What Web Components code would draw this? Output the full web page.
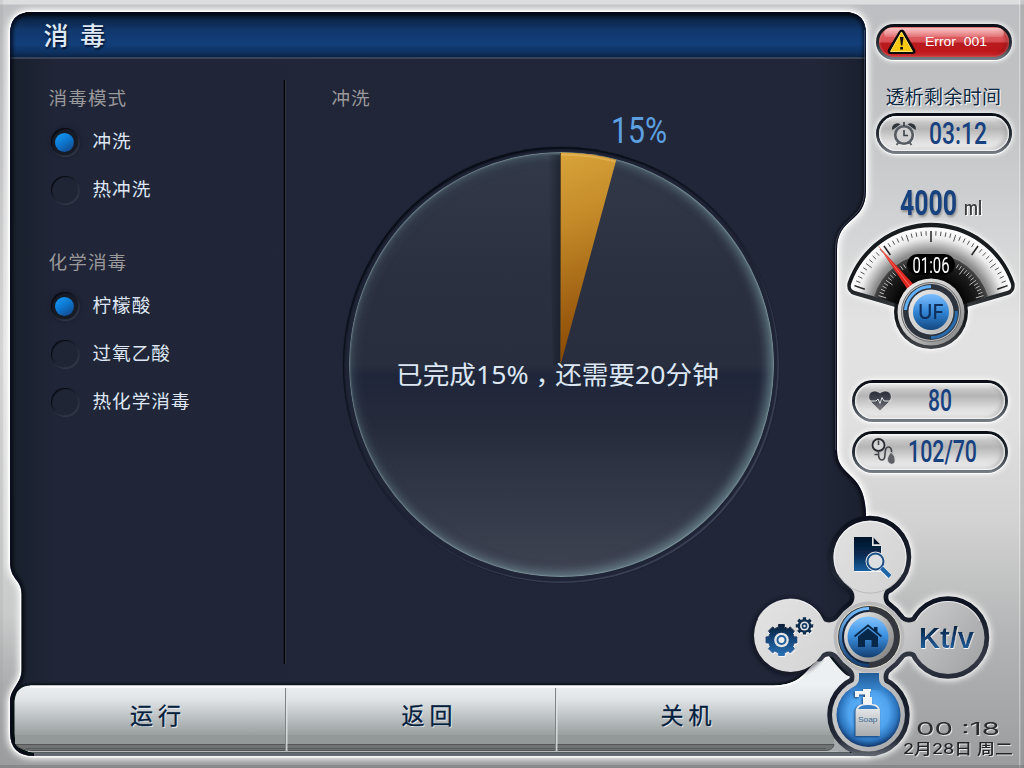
<!DOCTYPE html>
<html lang="zh-CN">
<head>
<meta charset="utf-8">
<title>消毒</title>
<style>
html,body{margin:0;width:1024px;height:768px;overflow:hidden;font-family:"Noto Sans CJK SC","Noto Sans",sans-serif}
</style>
</head>
<body>
<dialysis-screen></dialysis-screen>
<script>
const define = (name, render, after) => customElements.define(name, class extends HTMLElement {
  connectedCallback() {
    if (this.shadowRoot) return;
    const a = (k, d = '') => this.getAttribute(k) ?? d;
    this.attachShadow({ mode: 'open' }).innerHTML = render(a);
    if (after) after(this, a);
  }
});

/* One line of text condensed or widened to a fixed width */
define('fit-text', a => {
  const w = +a('w'), h = +a('h'), s = +a('size');
  return `<style>:host{display:block;width:${w}px;height:${h}px;flex:none}svg{display:block;overflow:visible;filter:${a('shadow', 'none')}}
  text{font-family:${a('font', 'Roboto')},"Noto Sans CJK SC",sans-serif;font-weight:${a('weight', '400')};font-size:${s}px;fill:${a('color', '#17417f')};white-space:pre}.comma{font-family:"Noto Sans CJK TC"}</style>
  <svg width="${w}" height="${h}"><text x="0" y="0" transform="translate(0 ${h})">${a('value').replace(/，(.*)/, '<tspan class="comma" lang="zh-Hant" dy="8">，</tspan><tspan dy="-8">$1</tspan>')}</text></svg>`;
}, (el, a) => {
  const t = el.shadowRoot.querySelector('text');
  const n = t.getComputedTextLength();
  if (n) t.setAttribute('transform', `translate(0 ${a('h')}) scale(${a('w') / n} 1)`);
});

define('panel-frame', () => {
  const screen = 'M10 34Q10 12 32 12H844Q866 12 866 34V190C866 224 837 216 837 250V450C837 479 866 470 866 516L880 600L869 756H34Q10 756 10 732V702C10 688 21.500 684 21.500 670V594C21.500 579 10 580 10 562Z';
  return `<style>:host{display:block}svg{display:block}</style>
  <svg width="1024" height="768" viewBox="0 0 1024 768">
  <defs>
    <linearGradient id="bg" x2="0" y2="1"><stop offset="0" stop-color="#bdbec1"/><stop offset=".15" stop-color="#c2c3c5"/><stop offset=".3" stop-color="#d3d4d5"/><stop offset=".42" stop-color="#e2e2e2"/><stop offset=".55" stop-color="#e0e0e0"/><stop offset=".68" stop-color="#d2d2d2"/><stop offset=".83" stop-color="#b3b4b5"/><stop offset="1" stop-color="#9b9c9e"/></linearGradient>
    <linearGradient id="lf" x2="0" y2="1"><stop offset="0" stop-color="#bdbec1"/><stop offset=".45" stop-color="#e0e0e0"/><stop offset=".8" stop-color="#c9caca"/><stop offset=".9" stop-color="#a9aaab"/><stop offset="1" stop-color="#9b9c9e"/></linearGradient>
    <linearGradient id="sc"><stop offset="0" stop-color="#17202c"/><stop offset=".05" stop-color="#202537"/><stop offset=".93" stop-color="#212638"/><stop offset="1" stop-color="#191e2c"/></linearGradient>
    <linearGradient id="hd" x2="0" y2="1"><stop offset="0" stop-color="#030a14"/><stop offset=".16" stop-color="#0b2547"/><stop offset=".4" stop-color="#11386d"/><stop offset=".72" stop-color="#123e79"/><stop offset=".9" stop-color="#0e3160"/><stop offset="1" stop-color="#0a2345"/></linearGradient>
    <linearGradient id="bar" gradientUnits="userSpaceOnUse" x1="0" y1="685" x2="0" y2="744"><stop offset="0" stop-color="#edf0f2"/><stop offset=".25" stop-color="#dfe3e5"/><stop offset=".55" stop-color="#bcc1c3"/><stop offset=".9" stop-color="#939899"/><stop offset="1" stop-color="#a6aaab"/></linearGradient>
    <clipPath id="c"><path d="${screen}"/></clipPath>
    <filter id="b3" x="-10%" y="-10%" width="120%" height="120%"><feGaussianBlur stdDeviation="3"/></filter>
    <filter id="b2" x="-10%" y="-10%" width="120%" height="120%"><feGaussianBlur stdDeviation="2"/></filter>
    <filter id="b1"><feGaussianBlur stdDeviation="1.2"/></filter>
  </defs>
  <rect width="1024" height="768" fill="url(#bg)"/>
  <rect width="22" height="768" fill="url(#lf)"/>
  <path d="M0 .5H1024M0 3H1024" stroke="#dcdddf" stroke-width="3"/>
  <rect x="1020" width="4" height="768" fill="#888" opacity=".28"/><rect x="1019" width="1.500" height="768" fill="#fff" opacity=".35"/>
  <rect width="3" height="768" fill="#999" opacity=".2"/><rect y="765" width="1024" height="3" fill="#707173" opacity=".45"/>
  <g fill="#fff" stroke="#fff" stroke-width="6" stroke-linejoin="round" filter="url(#b3)" opacity=".95">
    <path d="${screen}"/><circle cx="870" cy="557" r="40"/><circle cx="948" cy="637.500" r="40"/><circle cx="869" cy="715" r="40"/><circle cx="869" cy="637" r="40"/>
  </g>
  <path d="${screen}" fill="none" stroke="#fff" stroke-width="3" opacity=".8"/>
  <path d="${screen}" fill="url(#sc)"/>
  <g clip-path="url(#c)">
    <rect x="10" y="12" width="856" height="45" fill="url(#hd)"/>
    <rect x="10" y="57" width="856" height="2" fill="#39445a"/>
    <path d="${screen}" fill="none" stroke="#02050a" stroke-width="4" filter="url(#b2)"/>
    <path d="M864.500 30V190C864.500 222 835.500 216 835.500 250V450" fill="none" stroke="#77808f" opacity=".45"/>
  </g>
  <path d="M284.500 80V664" stroke="#000" stroke-width="1.400"/><path d="M285.700 80V664" stroke="#3b4152" stroke-width=".8"/>
  <path d="M13 704Q13 684 32 684H776C812 681 808 655 831 655L866 700V754H34Q12 754 12 730Z" fill="#06090f" filter="url(#b1)"/>
  <path d="M34 754.500H869" stroke="#646973" stroke-width="3"/>
  <path d="M14.500 701Q16 685.500 31 685.500H774C812 684 806 659 829 656Q846 678 850 676V752.500H33Q14.500 750 14.500 733Z" fill="url(#bar)"/>
  <path d="M16 743V735H836L846 750L838 752H34Q19 750 16 741Z" fill="#a4a9ab"/>
  <rect x="15" y="735" width="819" height="9" fill="#939899"/>
  <path d="M16 744.500H834Q833 750 826 750.500H33Q19 750 16 744.500Z" fill="#707373" stroke="#555" stroke-width="1"/>
  <path d="M26 748.500H826" stroke="#555a5b" stroke-width="1"/><path d="M28 751.500H838" stroke="#b6babb" stroke-width="1"/>
  <path d="M30 686.500H774C812 685 806 660 829 657" fill="none" stroke="#fff" stroke-width="1.800"/>
  <g stroke-width="1"><path d="M285.500 688V751M555.500 688V751" stroke="#7e8384"/><path d="M286.800 688V751M556.800 688V751" stroke="#e2e6e8" stroke-width="1.200"/></g>
  </svg>`;
});

define('radio-option', a => `<style>
  :host{display:flex;align-items:center;height:28px;color:#dfe7f4;font-size:18.600px;letter-spacing:1px;line-height:28px}
  i{box-sizing:border-box;width:28px;height:28px;border-radius:50%;margin-right:14px;flex:none;display:grid;place-items:center;background:${a('on') ? '#171b26' : '#202536'};box-shadow:inset 1px 1px 1px #07090f,inset -.5px -.5px 1px #373c4c,.5px 1px 1px #353a49${a('on') ? ',0 0 5px #0a122066' : ''}}
  b{width:19px;height:19px;border-radius:50%;background:linear-gradient(145deg,#13a0ff,#0d74cb 50%,#163f80);display:${a('on') ? 'block' : 'none'}}
  span{transform:translateY(-2px)}</style><i><b></b></i><span><slot></slot></span>`);

define('option-group', a => `<style>:host{display:flex;flex-direction:column;gap:20px}h3{margin:-1px 0 -2px -.5px;font-weight:400;font-size:18.600px;line-height:26px;letter-spacing:1.100px;color:#99989a}div{display:flex;flex-direction:column;gap:20px;margin-left:1.500px}</style><h3>${a('label')}</h3><div><slot></slot></div>`);

define('pie-progress', a => `<style>
  :host{display:grid;width:436px;height:436px;border-radius:50%}
  .ring,.disc,svg,p{grid-area:1/1}
  .ring{border-radius:50%;background:#1f2436;box-shadow:inset 1px 2px 2px #070b13,inset -1.500px -1.500px 1px #3b4155,0 0 1px #0d111c}
  .disc{margin:5.500px;border-radius:50%;background:linear-gradient(#323948,#2b3040 30%,#292e3f 50%,#20263a 52.500%,#252a3b 63%,#30354a00 63%),linear-gradient(#252a3b 63%,#303646 78%,#3f4352);box-shadow:inset 0 0 1.500px 1px #8aa2a4aa,inset -5px -3px 12px #80a2a899,inset 1px 0 14px #6f929a66}
  svg{display:block}
  p{margin:214.500px 0 0 53px;z-index:1}</style>
  <div class="ring"></div><div class="disc"></div>
  <svg width="436" height="436"><defs><linearGradient id="g" x2=".1" y2="1"><stop offset="0" stop-color="#d9a43a"/><stop offset=".35" stop-color="#c38928"/><stop offset="1" stop-color="#884603"/></linearGradient>
  <linearGradient id="s"><stop offset="0" stop-color="#111722" stop-opacity="0"/><stop offset="1" stop-color="#111722" stop-opacity=".55"/></linearGradient></defs>
  <path d="M205 8H217.500V218H210Z" fill="url(#s)"/><path d="M217.500 218V5.500A212.500 212.500 0 0 1 273.300 12.800Z" fill="url(#g)"/><path d="M218 7.500A211 211 0 0 1 272.500 14.500" fill="none" stroke="#f0c873" stroke-width="2" opacity=".4"/><path d="M217.500 6V218" stroke="#5f4420"/></svg>
  <p><fit-text w="323" h="23" size="25" font="'Noto Sans'" color="#dce7f3" value="${a('message')}"></fit-text></p>`);

define('status-pill', a => {
  const red = a('kind') === 'error';
  return `<style>:host{display:block}div{box-sizing:border-box;width:${a('w')}px;height:${a('h')}px;border-radius:21px;padding:3px;background:linear-gradient(#090d13,#292f37 55%,#7a8088);box-shadow:0 0 4px 2px #ffffffb0,0 1px 1px #fff}
  section{height:100%;box-sizing:border-box;border-radius:20px;position:relative;display:flex;align-items:center;background:${red ? 'linear-gradient(#e56c70,#d95054 48%,#b71b1f 55%,#bd171b 80%,#df3135)' : 'linear-gradient(#f4f4f4,#c6c6c6 18%,#b5b5b5 36%,#dfdfdf 72%,#efefef)'};box-shadow:inset 0 0 2px 1px ${red ? '#f6b2b455' : '#fff'},inset -3px -1px 4px ${red ? '#80101088' : '#8a8a8a99'}}
  ${red ? 'section:before{content:"";position:absolute;left:5px;right:5px;top:1px;height:9px;border-radius:10px 10px 6px 6px;background:linear-gradient(#ffdadacc,#ffffff22)}' : ''}
  ::slotted(*){position:relative}</style><div><section><slot></slot></section></div>`;
});

const icons = {
  warn: '<path d="M17 3.500Q14.500 3.500 13.500 6L3 23.500Q1.500 28 6 28H27Q32 28 30 23.500L20 6Q19 3.500 17 3.500Z" fill="#0b0b0b"/><path d="M16.500 6L27.500 25.500H5.500Z" fill="#f7c811" stroke="#ffe36b" stroke-linejoin="round"/><path d="M14.900 11H18.500L17.400 19.500H16ZM15.200 21H18V23.500H15.200Z" fill="#111"/>',
  alarm: '<g stroke="#f3f3f3" transform="translate(.8 .8)" fill="none" opacity=".8"><circle cx="13" cy="14" r="9.500"/></g><circle cx="13" cy="14" r="8.800" fill="#cfcfcf" stroke="#565b61" stroke-width="2.600"/><path d="M13 9V14.500H17M13 1V5" fill="none" stroke="#3b4046" stroke-width="1.600"/><path d="M1.500 9C-.5 5 5 0 9.500 3.200ZM24.500 9C26.500 5 21 0 16.500 3.200Z" fill="#30353b"/><path d="M7.500 21.500L5.500 24M18.500 21.500L20.500 24" stroke="#5a5f64" stroke-width="2"/>',
  heart: '<defs><linearGradient id="h" x2="0" y2="1"><stop offset="0" stop-color="#292d38"/><stop offset=".5" stop-color="#484c56"/><stop offset="1" stop-color="#858688"/></linearGradient></defs><path d="M12 22L2.500 12.500C-2.500 6 4-1.500 12 4C20-1.500 26.500 6 21.500 12.500Z" fill="url(#h)" stroke="#eee" stroke-width=".6"/><path d="M.5 12H8L10 10L12 14.500L14 8.500L16 12H23.500" fill="none" stroke="#e4e4e4" stroke-width="1"/>',
  bp: '<circle cx="7.500" cy="7" r="6" fill="#d5d5d5" stroke="#282b30" stroke-width="1.800"/><path d="M7.500 7V2.500M7.500 13V16Q7.500 22 11 22Q14 22 14 16Q14 8.500 18 9Q21 10 20.500 15M3.500 16.500H8" fill="none" stroke="#42454a" stroke-width="1.600"/><path d="M20 14Q25 18 24 24Q21 28.500 17 24Q15 20 20 14Z" fill="#606166" stroke="#eee" stroke-width=".6"/>'
};
define('glyph-icon', a => `<style>:host{display:block;width:${a('w')}px;height:${a('h')}px;flex:none}svg{display:block;overflow:visible}</style><svg width="${a('w')}" height="${a('h')}">${icons[a('name')]}</svg>`);

define('uf-gauge', a => {
  let t = '';
  const tick = (deg, r1, r2, c, w) => {
    const q = deg * Math.PI / 180, s = Math.sin(q), k = -Math.cos(q);
    t += `<path d="M${s * r1} ${k * r1}L${s * r2} ${k * r2}" stroke="${c}" stroke-width="${w}"/>`;
  };
  for (let i = -20; i <= 20; i++) {
    const m = i % 10 === 0, h = i % 5 === 0;
    tick(i * 3.55, 81, m ? 70 : h ? 74 : 76.5, m ? '#222' : '#555', m ? 1.5 : 1);
  }
  for (let i = 0; i < 13; i++) for (const s of [-1, 1]) tick(s * (30 + i * 3.55), 55, i % 5 === 2 ? 47 : 50.5, '#bbb', 1);
  return `<style>:host{display:block;width:170px;height:128px}svg{display:block;overflow:visible;filter:drop-shadow(0 0 1px #fff) drop-shadow(0 0 3px #fff)}text{font-family:Roboto,sans-serif}</style>
  <svg width="170" height="128" viewBox="-85 -89 170 128"><defs>
  <radialGradient id="f" gradientUnits="userSpaceOnUse" cx="0" cy="0" r="84"><stop offset=".72" stop-color="#8c8c8c"/><stop offset=".88" stop-color="#ececec"/><stop offset="1" stop-color="#fff"/></radialGradient>
  <radialGradient id="d" gradientUnits="userSpaceOnUse" cx="0" cy="0" r="62"><stop offset=".55" stop-color="#050505"/><stop offset=".8" stop-color="#1d1d1d"/><stop offset="1" stop-color="#5a5a5a"/></radialGradient>
  <linearGradient id="k" x2="1" y2="1"><stop offset="0" stop-color="#f5f5f5"/><stop offset=".5" stop-color="#c4c4c4"/><stop offset="1" stop-color="#777"/></linearGradient>
  <linearGradient id="u" x2="0" y2="1"><stop offset="0" stop-color="#7dbeff"/><stop offset=".5" stop-color="#3185d5"/><stop offset="1" stop-color="#14477f"/></linearGradient>
  <linearGradient id="o" x2="0" y2="1"><stop offset="0" stop-color="#1a1d20"/><stop offset=".6" stop-color="#15181b"/><stop offset="1" stop-color="#42464a"/></linearGradient></defs>
  <g fill="url(#o)"><path d="M-30 6L-36-5L-77-17Q-85-20-83.500-29A88 88 0 0 1 83.500-29Q85-20 77-17L36-5L30 6Z"/><circle r="37"/></g>
  <path d="M-34-9L-76-21Q-82-23-79.500-29A84.500 84.500 0 0 1 79.500-29Q82-23 76-21L34-9Z" fill="url(#f)"/>
  <path d="M-34-8L-57-15.500A59.500 59.500 0 0 1 57-15.500L34-8Z" fill="url(#d)"/>${t}
  <path d="M-52.500-66L-17-27L-23-22Z" fill="#df2620"/><path d="M-52.500-66L-20-24.500" stroke="#ff8b76" stroke-width=".7"/>
  <rect x="-24" y="-58" width="48" height="21" rx="10.500" fill="#000"/><text x="-18.500" y="-39.500" font-size="22" textLength="37" lengthAdjust="spacingAndGlyphs" fill="#fff">${a('time')}</text>
  <circle r="33.500" fill="url(#k)"/><circle r="29.500" fill="#bdbdbd" stroke="#6c6c6c" stroke-width="1"/><circle r="28" fill="#2c333d"/>
  <path d="M-25.500-2A25.500 25.500 0 0 1 0-25.500" fill="none" stroke="#62b1fb" stroke-width="3"/><path d="M25.500-1A25.500 25.500 0 0 1 0 25.500" fill="none" stroke="#286bad" stroke-width="3"/>
  <circle r="22.500" fill="#dedede"/><circle r="22" fill="url(#k)" opacity=".45"/><circle r="18" fill="url(#u)"/>
  <text x="-13" y="7" font-size="20" textLength="26" lengthAdjust="spacingAndGlyphs" style="font-family:Inter" font-weight="500" fill="#10305d">UF</text></svg>`;
});

define('nav-dock', () => {
  /* bridge between hub and a lobe 80px away, with 12px concave fillets */
  const neck = 'M-19.900-50A12 12 0 0 1-19.900-30L19.900-30A12 12 0 0 1 19.900-50Z';
  const necks = [0, 90, 180, 270].map(r => `<path d="${neck}" transform="translate(869 637) rotate(${r})"/>`).join('');
  const rest = '<circle cx="870" cy="557" r="36.500"/><circle cx="948" cy="637.500" r="36.500"/><circle cx="868.500" cy="715" r="36.500"/><circle cx="869" cy="637" r="36"/>' + necks;
  /* outline alternates between root and tip radius; ratios are fractions of one tooth pitch */
  const gear = (x, y, root, tip, n) => {
    const p = [];
    for (let i = 0; i < n; i++) for (const [f, r] of [[-.32, root], [-.24, tip], [.24, tip], [.32, root]]) {
      const q = (i + f) * 2 * Math.PI / n;
      p.push(`${(x + Math.sin(q) * r).toFixed(2)} ${(y - Math.cos(q) * r).toFixed(2)}`);
    }
    return `<path d="M${p.join('L')}Z"/>`;
  };
  return `<style>:host{display:block;position:absolute;left:740px;top:500px;width:284px;height:268px;pointer-events:none}svg{display:block}text{font-family:"Liberation Sans",sans-serif}</style>
  <svg width="284" height="268" viewBox="740 500 284 268"><defs>
  <linearGradient id="m" gradientUnits="userSpaceOnUse" x1="790" y1="560" x2="960" y2="700"><stop offset="0" stop-color="#e3e3e4"/><stop offset=".5" stop-color="#d2d2d3"/><stop offset="1" stop-color="#a0a1a3"/></linearGradient>
  <linearGradient id="dk" gradientUnits="userSpaceOnUse" x1="0" y1="515" x2="0" y2="757"><stop offset="0" stop-color="#0a0e1b"/><stop offset=".25" stop-color="#232835"/><stop offset=".36" stop-color="#0d1220"/><stop offset=".6" stop-color="#343945"/><stop offset=".75" stop-color="#141a28"/><stop offset=".93" stop-color="#262c38"/><stop offset="1" stop-color="#666b75"/></linearGradient>
  <linearGradient id="ib" gradientUnits="userSpaceOnUse" x1="0" y1="540" x2="0" y2="577"><stop offset="0" stop-color="#04172c"/><stop offset=".4" stop-color="#082a50"/><stop offset="1" stop-color="#1e72bd"/></linearGradient>
  <linearGradient id="gb" gradientUnits="userSpaceOnUse" x1="0" y1="622" x2="0" y2="655"><stop offset="0" stop-color="#04172c"/><stop offset=".45" stop-color="#123f70"/><stop offset="1" stop-color="#2770b3"/></linearGradient>
  <linearGradient id="bl" x2="0" y2="1"><stop offset="0" stop-color="#83c4ff"/><stop offset=".45" stop-color="#3e93e4"/><stop offset="1" stop-color="#123d70"/></linearGradient>
  <linearGradient id="ar" gradientUnits="userSpaceOnUse" x1="0" y1="608" x2="0" y2="666"><stop offset="0" stop-color="#77bfff"/><stop offset="1" stop-color="#123d73"/></linearGradient>
  <linearGradient id="kn" x2="1" y2="1"><stop offset="0" stop-color="#f5f5f5"/><stop offset="1" stop-color="#777"/></linearGradient>
  <linearGradient id="bt" x2="0" y2="1"><stop offset="0" stop-color="#eef0f1"/><stop offset="1" stop-color="#a6aaad"/></linearGradient>
  <radialGradient id="so" gradientUnits="userSpaceOnUse" cx="868.500" cy="712" r="34"><stop offset="0" stop-color="#69bbff"/><stop offset=".6" stop-color="#4fa3ee"/><stop offset=".85" stop-color="#2c74bd"/><stop offset="1" stop-color="#153f76"/></radialGradient>
  <linearGradient id="np" gradientUnits="userSpaceOnUse" x1="0" y1="670" x2="0" y2="693"><stop offset="0" stop-color="#1c548f"/><stop offset="1" stop-color="#3d8cd6"/></linearGradient>
  <filter id="b" x="-30%" y="-30%" width="160%" height="160%"><feGaussianBlur stdDeviation="2.5"/></filter><filter id="e"><feDropShadow dx=".5" dy="1" stdDeviation=".2" flood-color="#f8f8f8"/></filter>
  <mask id="md" maskUnits="userSpaceOnUse" x="740" y="500" width="284" height="268"><g fill="#fff" stroke="#fff" stroke-width="9.500" stroke-linejoin="round">${rest}</g></mask>
  <mask id="ml" maskUnits="userSpaceOnUse" x="740" y="500" width="284" height="268"><g fill="#fff"><circle cx="790.500" cy="635.500" r="36.500"/>${rest}</g></mask>
  <mask id="mw" maskUnits="userSpaceOnUse" x="740" y="500" width="284" height="268"><path fill="#fff" d="M740 500H860V640L838 654Q829 652 822 663Q807 684 777 684H740Z"/></mask></defs>
  <g mask="url(#mw)"><g fill="#070b14" stroke="#070b14" stroke-width="5" filter="url(#b)" opacity=".7"><circle cx="790" cy="636.500" r="35.500"/><circle cx="869" cy="558" r="36"/></g></g>
  <rect x="740" y="500" width="284" height="268" fill="url(#dk)" mask="url(#md)"/>
  <rect x="740" y="500" width="284" height="268" fill="url(#m)" mask="url(#ml)"/>
  <g fill="none" stroke="#fff" stroke-width="1.200" opacity=".65"><path d="M838 574A36 36 0 1 1 902 574M916 621A36 36 0 0 1 980 621M758 619A36 36 0 0 1 820 615"/></g>
  <path d="M900 577A36 36 0 0 1 840 577" stroke="#9a9a9c" fill="none" opacity=".45"/>
  <circle cx="869" cy="637" r="35.500" fill="#b9b9bb"/><circle cx="869" cy="637" r="31.500" fill="#34373d" stroke="#e1dfcf" stroke-width="1"/>
  <path d="M869 608.500A28.500 28.500 0 0 0 869 665.500" fill="none" stroke="url(#ar)" stroke-width="3"/>
  <path d="M869 611A26 26 0 0 0 869 663" fill="none" stroke="#0c2342" stroke-width="1.500"/><circle cx="869" cy="637" r="25" fill="url(#kn)"/><circle cx="868" cy="637" r="20.500" fill="url(#bl)"/>
  <path d="M858 636L868 628L878 636V647H871.500V640H865V647H858ZM874 627H877.500V633L874 630Z" fill="#082849"/><path d="M854.500 636.500L868 625.500L881.500 636.500" fill="none" stroke="#082849" stroke-width="1.800"/><path d="M857.500 636.500L868 628L878.500 636.500" fill="none" stroke="#4f9de6" stroke-width=".7"/>
  <circle cx="868.500" cy="715" r="32" fill="url(#so)"/><path d="M859 673H879V679Q879 685 888 690H849Q859 685 859 679Z" fill="url(#np)"/>
  <g fill="url(#bt)" style="filter:drop-shadow(-1px 1px 1px #123d70)"><path d="M855 695V691H863V689H871V691.500H870V697H872V704H863V697H865V694.500H859V697H855Z" fill="#f2f4f5"/><path d="M855.500 736V712Q856 704 864 704H872Q880 704 880 712V736H855.500Z"/><path d="M858 709Q860 705 868 705Q876 705 878 709Z" fill="#347fc5"/></g>
  <text x="858" y="722" font-size="8" textLength="19.500" lengthAdjust="spacingAndGlyphs" fill="#3d6a94">Soap</text>
  <g filter="url(#e)"><path d="M854 537H872V546H881V571H854Z" fill="url(#ib)"/><path d="M873.500 537.500L880.500 544.500H873.500Z" fill="#06182d"/></g>
  <circle cx="875.500" cy="561.500" r="10" fill="#dedfe0"/><circle cx="875.500" cy="561.500" r="8" fill="#dedfe0" stroke="#174e86" stroke-width="2"/><path d="M881 568L890 577" stroke="#efefef" stroke-width="6"/><path d="M881.500 568L890 576.500" stroke="#1d66aa" stroke-width="4"/>
  <g fill="url(#gb)" stroke="url(#gb)" stroke-width="1" stroke-linejoin="round" filter="url(#e)">${gear(781.500, 640, 13.2, 15.8, 8)}</g><circle cx="781.500" cy="640" r="7.300" fill="#e4e4e5"/><circle cx="781.500" cy="640" r="5" fill="#205f9c"/><circle cx="781.500" cy="640" r="3" fill="#ededee"/>
  <g fill="#112f50" filter="url(#e)">${gear(804.500, 626, 7, 9, 8)}</g><circle cx="804.500" cy="626" r="4.500" fill="#e2e2e3"/><circle cx="804.500" cy="626" r="2.900" fill="#173d65"/><circle cx="804.500" cy="626" r="1.200" fill="#e2e2e3"/>
  <text x="919" y="647.500" font-size="30" font-weight="700" textLength="55" lengthAdjust="spacingAndGlyphs" fill="url(#gb)" filter="url(#e)">Kt/v</text>
  </svg>`;
});

define('action-button', a => `<style>:host{display:grid;place-items:center;color:#04203c;font-size:23px;line-height:34px;font-weight:400;text-shadow:1px 1px 0 #e8ecee;-webkit-text-stroke:.3px #04203c}span{margin:-2px 0 0 -2px}</style><span><slot></slot></span>`);

define('side-panel', () => `<style>
  :host{display:flex;flex-direction:column;box-sizing:border-box;padding:23.500px 0 0;font-family:inherit}
  .top{margin-left:36px}.low{margin-left:12px}
  .lbl{margin:19px 0 1px 45.500px;font-size:19px;letter-spacing:.3px;line-height:33px;color:#0e2740;text-shadow:1px 1px 0 #fff;white-space:nowrap}
  .num{margin-top:-2px}
  .vol{display:flex;align-items:baseline;margin:35px 0 8px 60px;gap:7px}
  .clock{margin:auto 0 14px 63px;display:flex;flex-direction:column;gap:7px}
  </style>
  <status-pill class="top" kind="error" w="136" h="36"><glyph-icon name="warn" w="30" h="29" style="margin:-3px 0 0 6px"></glyph-icon><fit-text w="62" h="13" size="13.500" font="'Liberation Sans'" color="#fff" value="Error  001" style="margin:-5px 0 0 10px"></fit-text></status-pill>
  <div class="lbl">透析剩余时间</div>
  <status-pill class="top" w="136" h="41.500"><glyph-icon name="alarm" w="26" h="25" style="margin-left:12px"></glyph-icon><fit-text class="num" w="58" h="23" size="32" weight="500" value="03:12" style="margin-left:12px"></fit-text></status-pill>
  <div class="vol"><fit-text w="57" h="26" size="36" weight="700" value="4000" shadow="drop-shadow(1px 2px 1px #777b)"></fit-text><fit-text w="18" h="26" size="21" color="#3d3d3d" weight="500" value="ml" shadow="drop-shadow(1px 1px 0 #fff)"></fit-text></div>
  <uf-gauge time="01:06" style="margin-left:5.500px"></uf-gauge>
  <status-pill class="low" w="156" h="41.500" style="margin-top:29px"><glyph-icon name="heart" w="24" h="23" style="margin-left:13px"></glyph-icon><fit-text class="num" w="24" h="23" size="32" weight="500" value="80" style="margin-left:36px"></fit-text></status-pill>
  <status-pill class="low" w="156" h="41.500" style="margin-top:9.500px"><glyph-icon name="bp" w="25" h="26" style="margin:-2px 0 0 16px"></glyph-icon><fit-text class="num" w="69" h="23" size="32" weight="500" value="102/70" style="margin-left:12px"></fit-text></status-pill>
  <div class="clock"><fit-text w="84" h="13" size="17.500" font="Inter" color="#2b2d30" value="00 :18" shadow="drop-shadow(1px 1px 0 #e5e5e5)" style="margin-left:13px"></fit-text><fit-text w="110" h="13" size="14.500" font="Inter" weight="500" color="#222529" value="2月28日 周二" shadow="drop-shadow(1px 1px 0 #e5e5e5)" style="margin-top:-1px"></fit-text></div>`);

define('dialysis-screen', () => `<style>
  :host{display:grid;width:1024px;height:768px;position:relative}
  panel-frame,.ui{grid-area:1/1}
  .ui{z-index:1;display:grid;grid-template:58px 1fr 84px/840px 184px}
  h1{margin:0 0 0 43.500px;font-size:25px;font-weight:500;line-height:68px;color:#dfe9f5;word-spacing:6px;text-shadow:1px 2px 2px #04122a}
  side-panel{grid-area:1/2/4/3}
  main{display:grid;grid-template-columns:285px 1fr}
  .opts{padding:27px 0 0 49px;display:flex;flex-direction:column;gap:45px}
  .run{padding:26px 0 0 46.500px}
  .run h3{margin:0;font-size:18.600px;line-height:26px;font-weight:400;color:#99989a;letter-spacing:1px}
  footer{display:grid;grid-template-columns:271px 270px 278px;margin-left:15px}
  footer action-button{height:62px}
  </style>
  <panel-frame></panel-frame>
  <div class="ui"><h1>消 毒</h1>
    <main><div class="opts">
      <option-group label="消毒模式"><radio-option on="1">冲洗</radio-option><radio-option>热冲洗</radio-option></option-group>
      <option-group label="化学消毒"><radio-option on="1">柠檬酸</radio-option><radio-option>过氧乙酸</radio-option><radio-option>热化学消毒</radio-option></option-group>
    </div><div class="run"><h3>冲洗</h3>
      <fit-text w="56" h="27" size="37.500" color="#5da0e2" value="15%" style="margin:6px 0 3.500px 279.500px"></fit-text>
      <pie-progress message="已完成15%，还需要20分钟" style="margin-left:11.500px"></pie-progress></div>
    </main>
    <footer><action-button style="padding-left:12px">运 行</action-button><action-button style="padding-left:14px">返 回</action-button><action-button style="padding-right:16px">关 机</action-button></footer>
    <side-panel></side-panel></div>
  <nav-dock></nav-dock>`);
</script>
</body>
</html>
